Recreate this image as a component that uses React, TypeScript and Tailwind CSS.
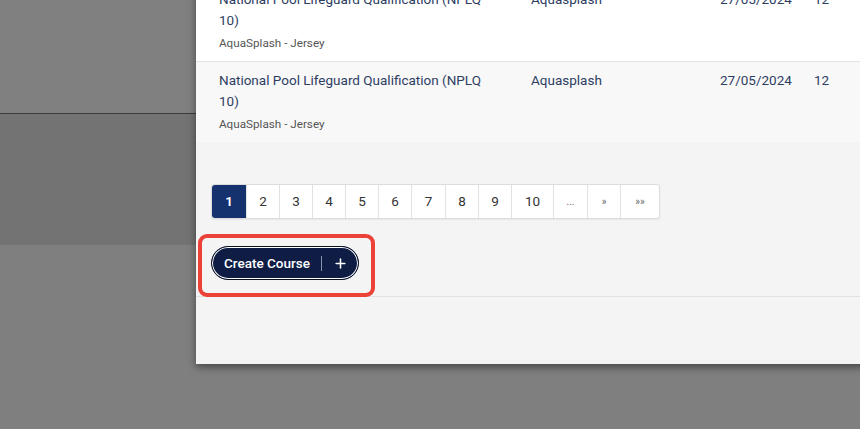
import React from 'react';
import { Plus } from 'lucide-react';

const courses = [
  { title: 'National Pool Lifeguard Qualification (NPLQ', tail: '10)', venue: 'AquaSplash - Jersey', provider: 'Aquasplash', date: '27/05/2024', places: '12', bg: 'bg-white' },
  { title: 'National Pool Lifeguard Qualification (NPLQ', tail: '10)', venue: 'AquaSplash - Jersey', provider: 'Aquasplash', date: '27/05/2024', places: '12', bg: 'bg-[#f8f8f8]' },
];

const pages = [
  { label: '1', w: 'w-[34px]', active: true },
  { label: '2', w: 'w-[33px]' },
  { label: '3', w: 'w-[33px]' },
  { label: '4', w: 'w-[33px]' },
  { label: '5', w: 'w-[33px]' },
  { label: '6', w: 'w-[33px]' },
  { label: '7', w: 'w-[34px]' },
  { label: '8', w: 'w-[33px]' },
  { label: '9', w: 'w-[33px]' },
  { label: '10', w: 'w-[42px]' },
  { label: '...', w: 'w-[34px]', muted: true },
  { label: '»', w: 'w-[33px]', muted: true },
  { label: '»»', w: 'w-[39px]', muted: true },
];

export default function App() {
  return (
    <div className="relative h-[429px] w-[860px] overflow-hidden bg-[#7f7f7f] font-['Roboto',sans-serif]">
      {/* page behind the modal */}
      <div className="h-[114px] border-b border-[#3b3b3b] bg-[#808080]" />
      <div className="h-[131px] bg-[#737373]" />

      {/* modal */}
      <div className="absolute left-[196px] right-[-20px] top-[-19px] flex h-[383px] flex-col bg-[#f4f4f4] shadow-[0_3px_8px_rgba(0,0,0,0.45)]">
        <div>
          {courses.map((c, idx) => (
            <div
              key={idx}
              className={`flex px-[23px] pt-[8px] pb-[6px] text-[13.5px] text-[#2e3e62] ${c.bg} ${
                idx === 0 ? 'border-b border-[#e3e3e3]' : ''
              }`}
            >
              <div className="w-[312px] shrink-0">
                <div className="leading-[21px] whitespace-nowrap">{c.title}</div>
                <div className="leading-[21px]">{c.tail}</div>
                <div className="text-[11.7px] leading-[24px] text-[#555]">{c.venue}</div>
              </div>
              <div className="w-[189px] shrink-0 leading-[21px]">{c.provider}</div>
              <div className="w-[94px] shrink-0 leading-[21px]">{c.date}</div>
              <div className="leading-[21px]">{c.places}</div>
            </div>
          ))}
        </div>

        <div className="px-[15px]">
          {/* pagination */}
          <div className="mt-[42px] flex h-[35px] w-max rounded-[3px] border border-[#dcdcdc] bg-white text-[13.5px] shadow-[0_1px_2px_rgba(0,0,0,0.06)]">
            {pages.map((p, idx) => (
              <div
                key={idx}
                className={`flex items-center justify-center ${p.w} ${
                  idx > 0 ? 'border-l border-[#e2e2e2]' : ''
                } ${
                  p.active
                    ? 'rounded-l-[3px] bg-[#16326e] font-semibold text-white'
                    : p.muted
                    ? 'text-[10px] text-[#666]'
                    : 'text-[#333]'
                }`}
              >
                {p.label}
              </div>
            ))}
          </div>

          {/* create course */}
          <button className="mt-[27px] flex h-[34px] items-center whitespace-nowrap rounded-full border border-[#0a0f24] bg-[#0f1d45] pl-[12px] pr-[10px] text-[13.5px] font-medium text-white shadow-[inset_0_0_0_1px_#ffffff]">
            <span>Create Course</span>
            <span className="mx-[11px] h-[15px] w-px shrink-0 bg-[#8a93ad]" />
            <Plus size={15} strokeWidth={2.5} className="shrink-0" />
          </button>
        </div>

        <div className="mt-[16px] border-t border-[#e1e1e1]" />

        {/* annotation */}
        <div className="absolute left-[2px] top-[253px] h-[63px] w-[177px] rounded-[9px] border-[4px] border-[#eb4136]" />
      </div>
    </div>
  );
}
